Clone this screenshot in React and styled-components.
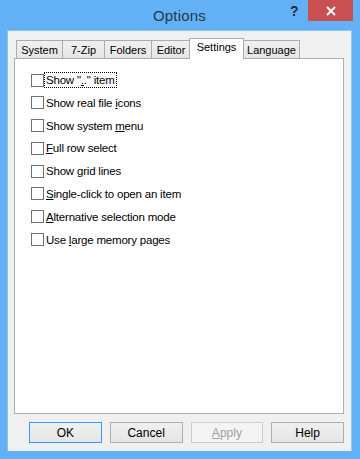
import React from 'react';
import styled, { createGlobalStyle } from 'styled-components';

const GlobalStyle = createGlobalStyle`
	body {
		margin: 0;
		background: #ffffff;
		font-family: 'Segoe UI', 'Noto Sans', sans-serif;
	}
`

const ui = `'Segoe UI', 'Liberation Sans', sans-serif`;

const Window = styled.div`
	width: 360px;
	height: 459px;
	box-sizing: border-box;
	background: #62b1f6;
	padding: 0 8px 8px 7px;
	display: flex;
	flex-direction: column;
	position: relative;
`

const TitleBar = styled.div`
	height: 30px;
	flex-shrink: 0;
	display: flex;
	align-items: center;
	justify-content: center;
	.title {
		font-family: ${ui};
		font-size: 15px;
		color: #283848;
		letter-spacing: 0.2px;
		margin-top: 1px;
	}
`

const HelpMark = styled.span`
	position: absolute;
	left: 290px;
	top: 3px;
	font-family: ${ui};
	font-weight: bold;
	font-size: 14px;
	color: #1e2a36;
`

const CloseButton = styled.div`
	position: absolute;
	left: 308px;
	top: 0;
	width: 45px;
	height: 21px;
	background: #c75050;
	display: flex;
	align-items: center;
	justify-content: center;
`

const Body = styled.div`
	flex: 1;
	min-height: 0;
	background: #f0f0f0;
	border: 1px solid #8fc3ee;
	border-bottom: none;
	border-right-color: #9ccbf1;
	display: flex;
	flex-direction: column;
	padding: 7px 7px 0 6px;
`

const TabRow = styled.div`
	display: flex;
	align-items: flex-end;
	height: 21px;
	padding-left: 2px;
	margin-bottom: -1px;
	position: relative;
	z-index: 1;
`

const Tab = styled.div`
	box-sizing: border-box;
	width: ${p => p.w}px;
	height: ${p => (p.active ? 21 : 19)}px;
	margin-left: ${p => p.ml}px;
	margin-right: ${p => (p.active ? -1 : 0)}px;
	border: 1px solid #acacac;
	border-bottom: ${p => (p.active ? 'none' : '1px solid #acacac')};
	background: ${p => (p.active ? '#ffffff' : 'linear-gradient(#f0f0f0, #e5e5e5)')};
	font-family: ${ui};
	font-size: 11px;
	color: #000;
	white-space: nowrap;
	display: flex;
	justify-content: center;
	align-items: ${p => (p.active ? 'flex-start' : 'center')};
	padding-top: ${p => (p.active ? 2 : 0)}px;
	position: relative;
	z-index: ${p => (p.active ? 2 : 1)};
`

const Panel = styled.div`
	box-sizing: border-box;
	height: 356px;
	flex-shrink: 0;
	background: #ffffff;
	border: 1px solid #adadad;
	padding: 15px 16px;
	display: flex;
	flex-direction: column;
	gap: 10.8px;
`

const Option = styled.label`
	display: flex;
	align-items: center;
	height: 12px;
	font-family: ${ui};
	font-size: 11.5px;
	letter-spacing: -0.2px;
	color: #000;
	.box {
		width: 13px;
		height: 13px;
		box-sizing: border-box;
		border: 1px solid #707070;
		background: #fff;
		flex-shrink: 0;
	}
	.text {
		padding: 0 1px;
		line-height: 14px;
		border: 1px dotted ${p => (p.focused ? '#000' : 'transparent')};
		white-space: nowrap;
	}
	u {
		text-underline-offset: 1px;
	}
`

const ButtonRow = styled.div`
	display: flex;
	gap: 8px;
	padding: 8px 0 0 15px;
`

const Button = styled.div`
	box-sizing: border-box;
	width: 73px;
	height: 21px;
	border: 1px solid ${p => (p.primary ? '#3399ff' : p.disabled ? '#cccccc' : '#adadad')};
	background: ${p => (p.disabled ? '#f4f4f4' : 'linear-gradient(#f0f0f0, #e5e5e5)')};
	color: ${p => (p.disabled ? '#a0a0a0' : '#000')};
	font-family: ${ui};
	font-size: 12px;
	display: flex;
	align-items: center;
	justify-content: center;
`

const tabs = [
	{ label: 'System', w: 47, ml: 0 },
	{ label: '7-Zip', w: 43, ml: -1 },
	{ label: 'Folders', w: 48, ml: -1 },
	{ label: 'Editor', w: 40, ml: -1 },
	{ label: 'Settings', w: 55, ml: -2, active: true },
	{ label: 'Language', w: 57, ml: 0 },
];

const options = [
	<>Show "<u>.</u>." item</>,
	<>Show real file <u>i</u>cons</>,
	<>Show system <u>m</u>enu</>,
	<><u>F</u>ull row select</>,
	<>Show <u>g</u>rid lines</>,
	<><u>S</u>ingle-click to open an item</>,
	<><u>A</u>lternative selection mode</>,
	<>Use <u>l</u>arge memory pages</>,
];

const App = () => {
	return (
		<>
			<GlobalStyle />
			<Window>
				<TitleBar>
					<span className="title">Options</span>
				</TitleBar>
				<HelpMark>?</HelpMark>
				<CloseButton>
					<svg width="10" height="10" viewBox="0 0 10 10">
						<path d="M1 1 L9 9 M9 1 L1 9" stroke="#ffffff" strokeWidth="2" />
					</svg>
				</CloseButton>
				<Body>
					<TabRow>
						{tabs.map(t =>
							<Tab key={t.label} w={t.w} ml={t.ml} active={t.active}>{t.label}</Tab>
						)}
					</TabRow>
					<Panel>
						{options.map((o, i) =>
							<Option key={i} focused={i === 0}>
								<span className="box" />
								<span className="text">{o}</span>
							</Option>
						)}
					</Panel>
					<ButtonRow>
						<Button primary>OK</Button>
						<Button>Cancel</Button>
						<Button disabled><span><u>A</u>pply</span></Button>
						<Button>Help</Button>
					</ButtonRow>
				</Body>
			</Window>
		</>
	);
}

export default App;
